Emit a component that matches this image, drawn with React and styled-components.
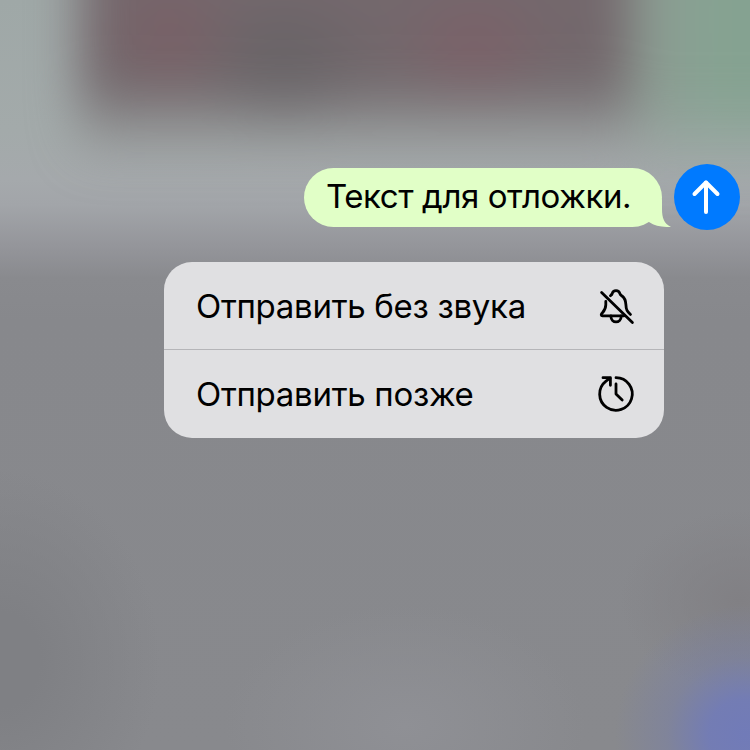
import React from "react";
import styled, { createGlobalStyle } from "styled-components";

const GlobalStyle = createGlobalStyle`
  body {
    margin: 0;
    font-family: Inter, "Liberation Sans", sans-serif;
  }
`;

const Screen = styled.main`
  position: relative;
  box-sizing: border-box;
  width: 750px;
  height: 750px;
  padding-top: 164px;
  overflow: hidden;
  isolation: isolate;
  background:
    radial-gradient(
      130px 130px at 745px 735px,
      #717bb8 0,
      rgba(113, 123, 184, 0.9) 28%,
      rgba(115, 124, 175, 0.38) 60%,
      rgba(120, 126, 155, 0) 100%
    ),
    radial-gradient(120px 90px at 740px 600px, #818084, rgba(129, 128, 132, 0)),
    radial-gradient(180px 120px at 405px 725px, #8f9095, rgba(143, 144, 149, 0)),
    radial-gradient(160px 190px at 0 660px, #7f8084 25%, rgba(127, 128, 132, 0)),
    linear-gradient(
      #9fa8a7 0,
      #a3aaaa 130px,
      #a5a9ac 180px,
      #a2a5a9 205px,
      #94959a 247px,
      #898a8e 278px,
      #87888c 320px,
      #88898d 100%
    );
`;

// blurred chat content behind the menu
const Backdrop = styled.div`
  position: absolute;
  inset: -60px;
  z-index: -1;
  display: flex;
  align-items: flex-start;
  filter: blur(24px);
`;

const DarkBlock = styled.div`
  flex: none;
  width: 550px;
  height: 225px;
  margin-left: 139px;
  background:
    radial-gradient(70px 75px at 90px 95px, rgba(125, 90, 98, 0.65), transparent),
    radial-gradient(95px 75px at 205px 118px, rgba(101, 98, 101, 0.9), transparent),
    radial-gradient(85px 65px at 395px 105px, rgba(128, 93, 102, 0.75), transparent),
    linear-gradient(
      #75696e 0,
      #72676b 130px,
      rgba(116, 109, 112, 0.88) 158px,
      rgba(128, 124, 126, 0.5) 186px,
      rgba(150, 150, 152, 0) 222px
    );
`;

const GreenBlock = styled.div`
  flex: none;
  width: 200px;
  height: 240px;
  background: linear-gradient(90deg, #8e9892, #87a292 70px, #81a38f);
  mask-image: linear-gradient(#000 155px, transparent 235px);
`;

const MessageRow = styled.div`
  display: flex;
  align-items: center;
  justify-content: flex-end;
  gap: 12px;
  padding-right: 10px;
`;

const Bubble = styled.div`
  position: relative;
  box-sizing: border-box;
  display: flex;
  align-items: center;
  width: 358px;
  height: 59px;
  padding: 0 0 2px 22px;
  border-radius: 29.5px;
  background: #e1ffc7;
`;

const Tail = styled.svg`
  position: absolute;
  right: -9px;
  bottom: 0;
`;

const Label = styled.span`
  color: #000;
  font-size: 33px;
  line-height: 42px;
  letter-spacing: ${({ $spacing }) => $spacing}px;
  white-space: nowrap;
`;

const SendButton = styled.button`
  width: 66px;
  height: 66px;
  padding: 0;
  border: 0;
  border-radius: 50%;
  background: #007aff;

  svg {
    display: block;
  }
`;

const Menu = styled.div`
  display: grid;
  grid-template-rows: 87px 89px;
  width: 500px;
  margin: 32px 86px 0 auto;
  border-radius: 28px;
  overflow: hidden;
  background: #e0e0e2;
`;

const MenuItem = styled.button`
  box-sizing: border-box;
  display: flex;
  align-items: center;
  justify-content: space-between;
  padding: 0 28px 0 32px;
  border: 0;
  background: transparent;
  font-family: inherit;

  & + & {
    border-top: 1px solid #b5b5b8;
  }
`;

const StrokeIcon = styled.svg`
  fill: none;
  stroke: ${({ $color }) => $color || "#000"};
  stroke-width: ${({ $weight }) => $weight || 2.8};
  stroke-linecap: round;
  stroke-linejoin: round;
`;

const BellOffIcon = () => (
  <StrokeIcon width="40" height="40" viewBox="0 0 40 40">
    <path d="M5.6 6.4L36.4 36.6" />
    <path d="M9.8 15.4V18.7C9.8 23.7 7.8 25.2 5.8 27.4C4.9 28.5 5 29.8 6.5 29.8H28.2" />
    <path d="M14.4 9.7C15.1 9.1 15.8 8.9 16.2 7.5C17.2 3.6 22.8 3.6 23.8 7.4C24.2 9.1 25 9.3 26.1 10C29.2 12.2 29.7 15 29.9 18.6C30.1 24 31.1 25.2 34.5 28.4" />
    <path d="M14.8 30C15.2 37.8 24.9 37.8 25.3 30" />
  </StrokeIcon>
);

const ClockIcon = () => (
  <StrokeIcon width="40" height="40" viewBox="0 0 40 40">
    <path d="M20 3.7A16.3 16.3 0 1 1 10 7.1L14 4.2" />
    <path d="M7 3.7H14.4V11.3" />
    <path d="M20 10V20L26.2 26" />
  </StrokeIcon>
);

const App = () => {
  return (
    <>
      <GlobalStyle />
      <Screen>
        <Backdrop>
          <DarkBlock />
          <GreenBlock />
        </Backdrop>

        <MessageRow>
          <Bubble>
            <Label $spacing={-0.42}>Текст для отложки.</Label>
            <Tail width="34" height="28" viewBox="0 0 34 28">
              <path
                d="M25 0V10C25 19 27 24.5 34 28C25.5 28.3 18 27 12 23L8 10Z"
                fill="#e1ffc7"
              />
            </Tail>
          </Bubble>
          <SendButton aria-label="Отправить">
            <StrokeIcon
              width="66"
              height="66"
              viewBox="0 0 66 66"
              $color="#fff"
              $weight={4}
            >
              <path d="M32 18.5V48" />
              <path d="M20.5 30L32 18.5L43.5 30" />
            </StrokeIcon>
          </SendButton>
        </MessageRow>

        <Menu>
          <MenuItem>
            <Label $spacing={-0.3}>Отправить без звука</Label>
            <BellOffIcon />
          </MenuItem>
          <MenuItem>
            <Label $spacing={-0.3}>Отправить позже</Label>
            <ClockIcon />
          </MenuItem>
        </Menu>
      </Screen>
    </>
  );
};

export default App;
